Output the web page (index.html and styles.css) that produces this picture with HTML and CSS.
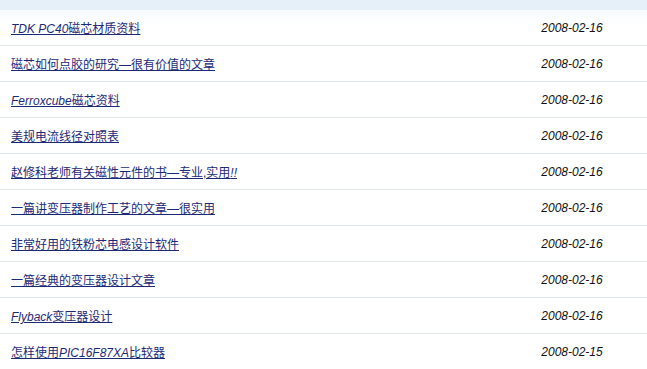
FILE: index.html
```html
<!DOCTYPE html>
<html lang="zh-CN">
<head>
<meta charset="utf-8">
<title>文章列表</title>
<link rel="stylesheet" href="styles.css">
</head>
<body>
<table class="list">
  <thead>
    <tr><th class="c-title">文章标题</th><th class="c-date">发布时间</th></tr>
  </thead>
  <tbody>
    <tr><td class="c-title"><a href="#"><i>TDK PC40</i>磁芯材质资料</a></td><td class="c-date">2008-02-16</td></tr>
    <tr><td class="c-title"><a href="#">磁芯如何点胶的研究—很有价值的文章</a></td><td class="c-date">2008-02-16</td></tr>
    <tr><td class="c-title"><a href="#"><i>Ferroxcube</i>磁芯资料</a></td><td class="c-date">2008-02-16</td></tr>
    <tr><td class="c-title"><a href="#">美规电流线径对照表</a></td><td class="c-date">2008-02-16</td></tr>
    <tr><td class="c-title"><a href="#">赵修科老师有关磁性元件的书—专业,实用<i>!!</i></a></td><td class="c-date">2008-02-16</td></tr>
    <tr><td class="c-title"><a href="#">一篇讲变压器制作工艺的文章—很实用</a></td><td class="c-date">2008-02-16</td></tr>
    <tr><td class="c-title"><a href="#">非常好用的铁粉芯电感设计软件</a></td><td class="c-date">2008-02-16</td></tr>
    <tr><td class="c-title"><a href="#">一篇经典的变压器设计文章</a></td><td class="c-date">2008-02-16</td></tr>
    <tr><td class="c-title"><a href="#"><i>Flyback</i>变压器设计</a></td><td class="c-date">2008-02-16</td></tr>
    <tr><td class="c-title"><a href="#">怎样使用<i>PIC16F87XA</i>比较器</a></td><td class="c-date">2008-02-15</td></tr>
  </tbody>
</table>
</body>
</html>
```
FILE: styles.css
```css
html, body {
  margin: 0;
  padding: 0;
  background: #ffffff;
}
body {
  font-family: "Liberation Sans", "Noto Sans CJK SC", sans-serif;
  font-size: 12px;
  color: #1a1a1a;
  overflow: hidden;
}
.list {
  width: 100%;
  border-collapse: collapse;
  margin-top: -20px;
}
.list th {
  height: 14px;
  padding: 8px 0 7px;
  line-height: 14px;
  font-weight: bold;
  font-size: 12px;
  color: #111;
  background: #e5f0f8;
  border-bottom: 1px solid #e5f0f8;
  text-align: center;
  vertical-align: top;
}
.list td {
  height: 35px;
  padding: 0;
  border-bottom: 1px solid #e1e6ec;
  vertical-align: middle;
}
.list tbody tr:first-child td {
  background: linear-gradient(#f6fafd, #ffffff 40%);
}
.list tbody tr:last-child td {
  border-bottom: none;
}
.list td.c-title {
  padding-left: 11px;
  text-align: left;
}
.list .c-date {
  width: 150px;
  text-align: center;
  font-style: italic;
  color: #111;
}
.list a {
  color: #1d2a78;
  text-decoration: underline;
}
.list a i {
  font-style: italic;
}
```
